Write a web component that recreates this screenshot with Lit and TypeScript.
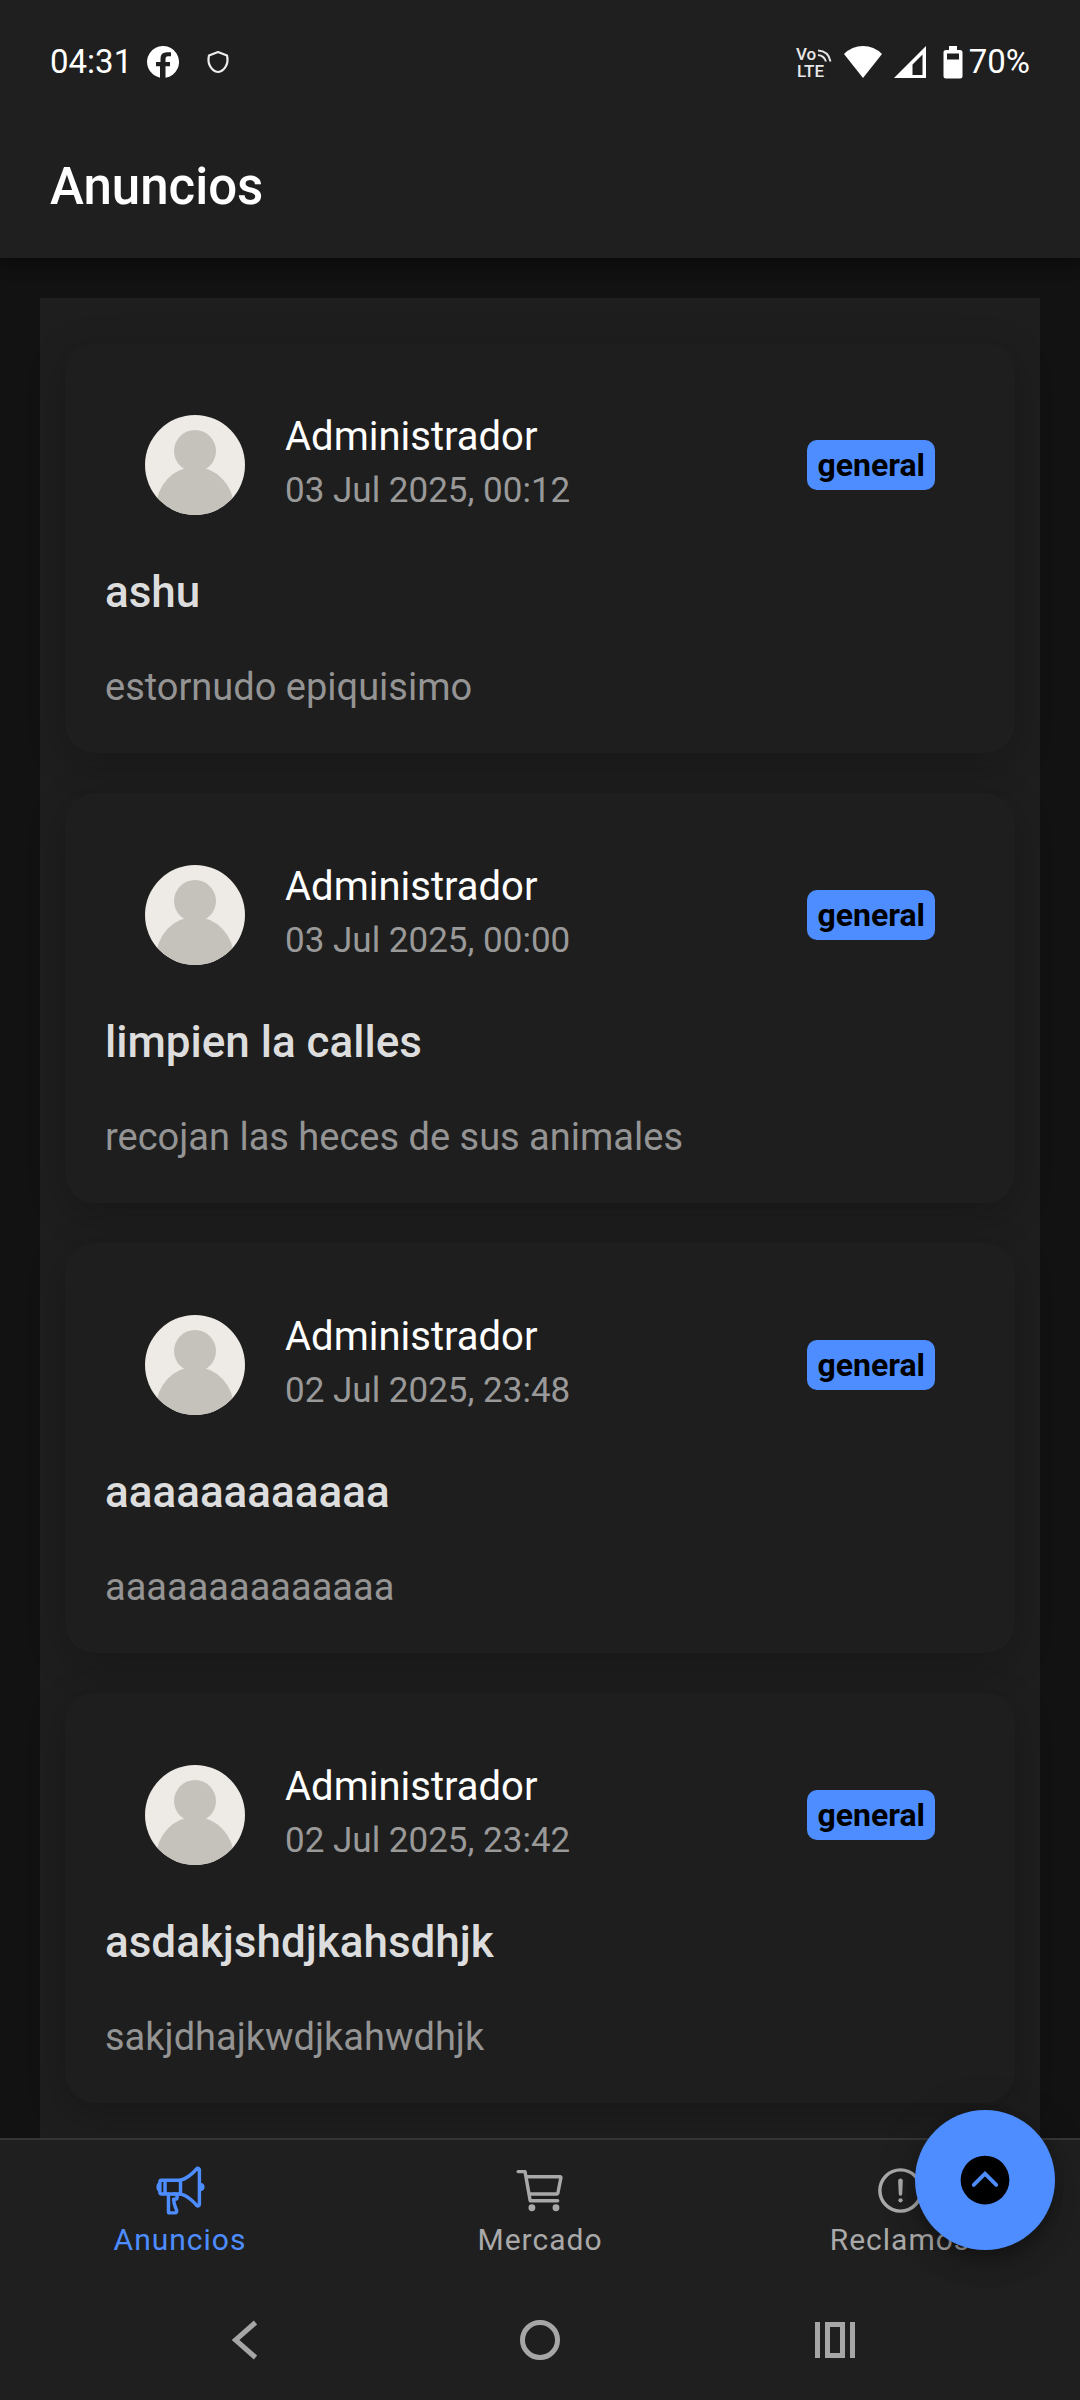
import { LitElement, html, css, svg } from "lit";
import { customElement, property } from "lit/decorators.js";

interface Announcement {
  author: string;
  date: string;
  category: string;
  title: string;
  body: string;
}

const announcements: Announcement[] = [
  { author: "Administrador", date: "03 Jul 2025, 00:12", category: "general", title: "ashu", body: "estornudo epiquisimo" },
  { author: "Administrador", date: "03 Jul 2025, 00:00", category: "general", title: "limpien la calles", body: "recojan las heces de sus animales" },
  { author: "Administrador", date: "02 Jul 2025, 23:48", category: "general", title: "aaaaaaaaaaaa", body: "aaaaaaaaaaaaaa" },
  { author: "Administrador", date: "02 Jul 2025, 23:42", category: "general", title: "asdakjshdjkahsdhjk", body: "sakjdhajkwdjkahwdhjk" },
];

const megaphone = svg`
  <path d="M407.94 52.22S321.3 160 240 160H80a16 16 0 00-16 16v96a16 16 0 0016 16h160c81.3 0 167.94 108.23 167.94 108.23 6.06 8 24.06 2.52 24.06-9.83V62c0-12.31-17-18.82-24.06-9.78zM64 256s-16-6-16-32 16-32 16-32M448 246s16-4.33 16-22-16-22-16-22M256 160v128M112 160v128"/>
  <path d="M144 288v168a8 8 0 008 8h53a16 16 0 0015.29-20.73C211.91 416.39 192 386.08 192 336h16a16 16 0 0016-16v-16a16 16 0 00-16-16h-16"/>`;

const cart = svg`
  <circle cx="176" cy="416" r="16" fill="currentColor"/>
  <circle cx="400" cy="416" r="16" fill="currentColor"/>
  <path d="M48 80h64l48 272h256"/>
  <path d="M160 288h249.44a8 8 0 007.85-6.43l28.8-144a8 8 0 00-7.85-9.57H128"/>`;

const alertCircle = svg`
  <circle cx="256" cy="256" r="192"/>
  <path d="M250.26 166.05L256 288l5.73-121.95a5.74 5.74 0 00-5.79-6 5.74 5.74 0 00-5.68 6z"/>
  <path d="M256 367.91a20 20 0 1120-20 20 20 0 01-20 20z" fill="currentColor" stroke="none"/>`;

const tabs = [
  { label: "Anuncios", icon: megaphone, href: "#anuncios", active: true },
  { label: "Mercado", icon: cart, href: "#mercado", active: false },
  { label: "Reclamos", icon: alertCircle, href: "#reclamos", active: false },
];

@customElement("status-bar")
class StatusBar extends LitElement {
  static styles = css`
    :host {
      display: flex;
      justify-content: space-between;
      align-items: center;
      padding: 42px 50px 33px;
      font-size: 33px;
      line-height: 40px;
      color: #fff;
    }
    .group { display: flex; align-items: center; }
    .time { margin-right: 15px; }
    .shield { margin-left: 27px; }
    .volte { margin-right: 12px; }
    .wifi { margin-right: 12px; }
    .signal { margin-right: 17px; }
    .battery { margin-right: 6px; }
    svg { display: block; }
    .mark { font: 500 17px Roboto, "Liberation Sans", sans-serif; fill: #e8e8e8; }
  `;

  render() {
    return html`
      <div class="group">
        <span class="time">04:31</span>
        <svg width="32" height="32" viewBox="0 0 32 32" role="img" aria-label="Facebook">
          <path fill="#fff" d="M13 31.700A16 16 0 1 1 18.500 31.800V20.200H23V16H18.500V12.500Q18.500 10.300 21 10.300H24V6.300H20Q13.500 6.300 13.500 12.500V16H9V20.200H13Z"/>
        </svg>
        <svg class="shield" width="24" height="24" viewBox="0 0 24 24" aria-hidden="true">
          <path fill="none" stroke="#eee" stroke-width="2.200" stroke-linejoin="round" d="M12 2L3 5.500Q1.500 11.500 4 16Q7 21.500 12 22Q17 21.500 20 16Q22.500 11.500 21 5.500Z"/>
        </svg>
      </div>
      <div class="group">
        <svg class="volte" width="36" height="40" viewBox="0 0 36 40" aria-hidden="true">
          <text class="mark" x="0" y="18">Vo</text>
          <text class="mark" x="1" y="35">LTE</text>
          <path fill="none" stroke="#e4e4e4" stroke-width="2" d="M22 8.500Q32.500 9 34.500 19.500M22 13Q28 13.500 30 19.500"/>
        </svg>
        <svg class="wifi" width="38" height="32" viewBox="0 0 38 32" aria-hidden="true">
          <path fill="#fff" d="M0 8Q8 0 19 0T38 8L19 32Z"/>
        </svg>
        <svg class="signal" width="32" height="32" viewBox="0 0 32 32" aria-hidden="true">
          <path fill="#fff" fill-rule="evenodd" d="M0 32L32 0V32ZM18.500 29H28.500V8.500L18.500 18.500Z"/>
        </svg>
        <svg class="battery" width="20" height="33" viewBox="0 0 20 33" aria-hidden="true">
          <path fill="#fff" fill-rule="evenodd" d="M6 0H14V4H17Q19.500 4 19.500 6.500V30Q19.500 32.500 17 32.500H3Q0.500 32.500 0.500 30V6.500Q0.500 4 3 4H6ZM4 7.500V13.500H16V7.500Z"/>
        </svg>
        <span>70%</span>
      </div>
    `;
  }
}

@customElement("announcement-card")
class AnnouncementCard extends LitElement {
  @property({ attribute: false }) item!: Announcement;

  static styles = css`
    :host {
      display: block;
      padding: 68px 40px 38px;
      border-radius: 30px;
      background: #1e1e1e;
      box-shadow: 0 10px 38px rgba(0, 0, 0, 0.23);
    }
    .meta {
      display: flex;
      align-items: center;
      gap: 40px;
      padding: 0 40px;
    }
    .avatar { display: block; flex: none; width: 100px; height: 100px; border-radius: 50%; }
    .who { flex: 1; min-width: 0; }
    .name { margin: 0; font-size: 40px; line-height: 52px; font-weight: 400; color: #fff; }
    .date { display: block; font-size: 35px; line-height: 56px; color: #999; }
    .badge {
      padding: 0 10px;
      border-radius: 10px;
      background: #4d8dff;
      color: #000;
      font-size: 32px;
      line-height: 50px;
      font-weight: 700;
    }
    .title { margin: 46px 0 40px; font-size: 44px; line-height: 54px; font-weight: 500; color: #ddd; }
    .body { margin: 0; font-size: 38px; line-height: 56px; color: #949494; }
  `;

  render() {
    const { author, date, category, title, body } = this.item;
    return html`
      <div class="meta">
        <svg class="avatar" viewBox="0 0 100 100" role="img" aria-label="Avatar">
          <rect width="100" height="100" fill="#eeebe6"/>
          <circle cx="50" cy="36" r="21" fill="#c5c2bb"/>
          <ellipse cx="50" cy="93" rx="39" ry="41" fill="#c5c2bb"/>
        </svg>
        <div class="who">
          <h3 class="name">${author}</h3>
          <time class="date">${date}</time>
        </div>
        <span class="badge">${category}</span>
      </div>
      <h2 class="title">${title}</h2>
      <p class="body">${body}</p>
    `;
  }
}

@customElement("app-root")
class AppRoot extends LitElement {
  static styles = css`
    :host {
      display: flex;
      flex-direction: column;
      min-height: 100vh;
      background: #121212;
      font-family: Roboto, "Liberation Sans", sans-serif;
    }
    .header {
      z-index: 1;
      background: #1f1f1f;
      box-shadow: 0 5px 10px -2px rgba(0, 0, 0, 0.2), 0 10px 12px rgba(0, 0, 0, 0.14), 0 2px 25px rgba(0, 0, 0, 0.12);
    }
    .heading {
      margin: 0;
      padding: 0 50px;
      font-size: 51px;
      line-height: 143px;
      font-weight: 500;
      color: #fff;
    }
    .content { display: flex; flex: 1; padding: 40px 40px 0; }
    .list {
      display: flex;
      flex: 1;
      flex-direction: column;
      gap: 40px;
      padding: 45px 25px 35px;
      background: #1e1e1e;
    }
    .bottom { position: relative; background: #1f1f1f; }
    .tabs {
      display: grid;
      grid-template-columns: repeat(3, 1fr);
      border-top: 2px solid #353535;
    }
    .tab {
      display: flex;
      flex-direction: column;
      align-items: center;
      gap: 4px;
      padding: 23px 0 22px;
      color: #a9a9a9;
      font-size: 30px;
      line-height: 36px;
      letter-spacing: 1px;
      text-decoration: none;
    }
    .tab.active { color: #4d8dff; }
    .icon {
      width: 55px;
      height: 55px;
      fill: none;
      stroke: currentColor;
      stroke-width: 32;
      stroke-linecap: round;
      stroke-linejoin: round;
    }
    .nav {
      display: grid;
      grid-template-columns: repeat(3, 1fr);
      padding: 0 98px;
    }
    .key, .fab {
      display: flex;
      align-items: center;
      justify-content: center;
      border: 0;
      padding: 0;
      background: none;
    }
    .key { height: 120px; }
    .fab {
      position: absolute;
      right: 25px;
      bottom: 150px;
      width: 140px;
      height: 140px;
      border-radius: 50%;
      background: #4d8dff;
      box-shadow: 0 8px 12px -2px rgba(0, 0, 0, 0.2), 0 15px 25px rgba(0, 0, 0, 0.14), 0 2px 45px rgba(0, 0, 0, 0.12);
    }
  `;

  render() {
    return html`
      <header class="header">
        <status-bar></status-bar>
        <h1 class="heading">Anuncios</h1>
      </header>
      <main class="content">
        <div class="list">
          ${announcements.map((item) => html`<announcement-card .item=${item}></announcement-card>`)}
        </div>
      </main>
      <footer class="bottom">
        <nav class="tabs">
          ${tabs.map((tab) => html`
            <a class="tab ${tab.active ? "active" : ""}" href=${tab.href}>
              <svg class="icon" viewBox="0 0 512 512" aria-hidden="true">${tab.icon}</svg>
              <span>${tab.label}</span>
            </a>`)}
        </nav>
        <div class="nav">
          <button class="key" aria-label="Atrás">
            <svg width="40" height="40" viewBox="0 0 40 40" fill="none" stroke="#a6a6a6" stroke-width="5">
              <path d="M30.500 2.500L10.500 20L30.500 37.500"/>
            </svg>
          </button>
          <button class="key" aria-label="Inicio">
            <svg width="40" height="40" viewBox="0 0 40 40" fill="none" stroke="#a6a6a6" stroke-width="5">
              <circle cx="20" cy="20" r="17.500"/>
            </svg>
          </button>
          <button class="key" aria-label="Recientes">
            <svg width="40" height="40" viewBox="0 0 40 40" fill="none" stroke="#a6a6a6" stroke-width="5">
              <path d="M2.500 2V38M37.500 2V38M12.500 4.500H27.500V35.500H12.500Z"/>
            </svg>
          </button>
        </div>
        <button class="fab" aria-label="Abrir acciones">
          <svg width="60" height="60" viewBox="0 0 512 512" aria-hidden="true">
            <circle cx="256" cy="256" r="208" fill="#000"/>
            <path d="M160 298L256 202L352 298" fill="none" stroke="#4d8dff" stroke-width="32" stroke-linecap="round"/>
          </svg>
        </button>
      </footer>
    `;
  }
}
